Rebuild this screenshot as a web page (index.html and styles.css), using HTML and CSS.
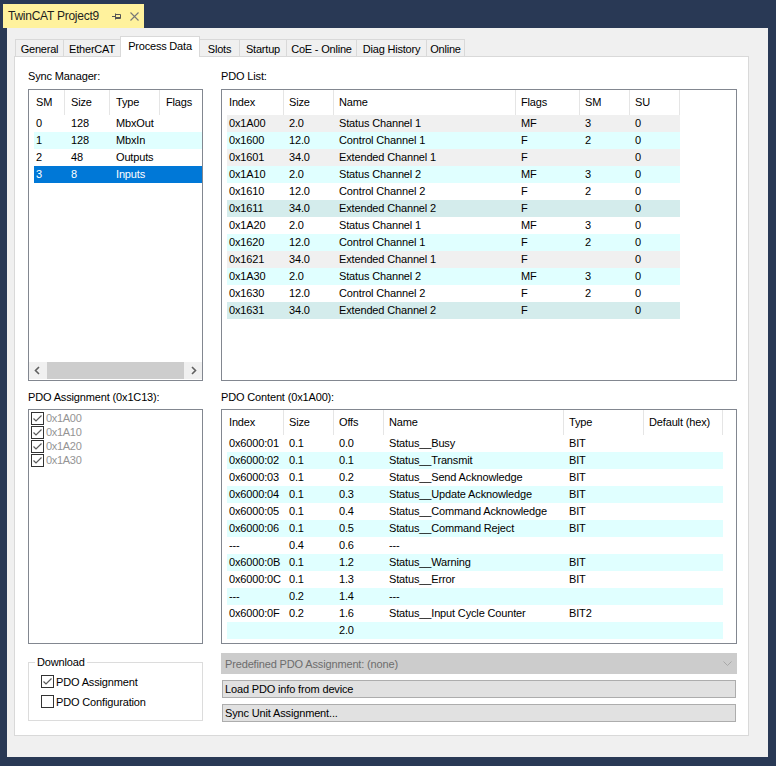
FILE: index.html
```html
<!DOCTYPE html>
<html>
<head>
<meta charset="utf-8">
<link rel="stylesheet" href="styles.css">
</head>
<body>
<div class="doc-bar">
  <div class="doc-tab">
    <span class="doc-title">TwinCAT Project9</span>
    <svg class="pin" viewBox="0 0 9 9"><path d="M0 4.5H3M3.5 1.5V7.5M3.5 2.5H8.5V6.5H3.5M3.5 5.5H8.5" fill="none" stroke="#555" stroke-width="1"/></svg>
    <svg class="close" viewBox="0 0 9 9"><path d="M0.5 0.5L8.5 8.5M8.5 0.5L0.5 8.5" fill="none" stroke="#777" stroke-width="1.1"/></svg>
  </div>
</div>
<div class="window">
  <div class="tabstrip">
    <div class="tab t-general">General</div>
    <div class="tab t-ethercat">EtherCAT</div>
    <div class="tab t-pd selected">Process Data</div>
    <div class="tab t-slots">Slots</div>
    <div class="tab t-startup">Startup</div>
    <div class="tab t-coe">CoE - Online</div>
    <div class="tab t-diag">Diag History</div>
    <div class="tab t-online">Online</div>
  </div>
  <div class="page">
    <div class="col col-left">
      <div class="label">Sync Manager:</div>
      <div class="listbox lb-top sm">
        <div class="hdr">
          <div class="hc c1">SM</div><div class="hc c2">Size</div><div class="hc c3">Type</div><div class="hc c4">Flags</div>
        </div>
        <div class="row"><div class="rc c1">0</div><div class="rc c2">128</div><div class="rc c3">MbxOut</div><div class="rc c4"></div></div>
        <div class="row cyan"><div class="rc c1">1</div><div class="rc c2">128</div><div class="rc c3">MbxIn</div><div class="rc c4"></div></div>
        <div class="row"><div class="rc c1">2</div><div class="rc c2">48</div><div class="rc c3">Outputs</div><div class="rc c4"></div></div>
        <div class="row sel"><div class="rc c1">3</div><div class="rc c2">8</div><div class="rc c3">Inputs</div><div class="rc c4"></div></div>
        <div class="hscroll">
          <div class="arrow"><svg viewBox="0 0 17 17"><polyline points="10,5 6.5,8.5 10,12" fill="none" stroke="#606060" stroke-width="1.6"/></svg></div>
          <div class="track"><div class="thumb"></div></div>
          <div class="arrow"><svg viewBox="0 0 17 17"><polyline points="7,5 10.5,8.5 7,12" fill="none" stroke="#606060" stroke-width="1.6"/></svg></div>
        </div>
      </div>
      <div class="label label2">PDO Assignment (0x1C13):</div>
      <div class="listbox lb-bottom assign">
        <div class="item"><span class="cb dis"><svg viewBox="0 0 11 11"><polyline points="1.5,5.5 4,8 9.5,2.5" fill="none" stroke="#5a5a5a" stroke-width="1.2"/></svg></span><span class="itxt">0x1A00</span></div>
        <div class="item"><span class="cb dis"><svg viewBox="0 0 11 11"><polyline points="1.5,5.5 4,8 9.5,2.5" fill="none" stroke="#5a5a5a" stroke-width="1.2"/></svg></span><span class="itxt">0x1A10</span></div>
        <div class="item"><span class="cb dis"><svg viewBox="0 0 11 11"><polyline points="1.5,5.5 4,8 9.5,2.5" fill="none" stroke="#5a5a5a" stroke-width="1.2"/></svg></span><span class="itxt">0x1A20</span></div>
        <div class="item"><span class="cb dis"><svg viewBox="0 0 11 11"><polyline points="1.5,5.5 4,8 9.5,2.5" fill="none" stroke="#5a5a5a" stroke-width="1.2"/></svg></span><span class="itxt">0x1A30</span></div>
      </div>
      <fieldset class="group">
        <legend>Download</legend>
        <div class="chk"><span class="cb"><svg viewBox="0 0 11 11"><polyline points="1.5,5.5 4,8 9.5,2.5" fill="none" stroke="#5a5a5a" stroke-width="1.2"/></svg></span><span>PDO Assignment</span></div>
        <div class="chk"><span class="cb"></span><span>PDO Configuration</span></div>
      </fieldset>
    </div>
    <div class="col col-right">
      <div class="label">PDO List:</div>
      <div class="listbox lb-top pl">
        <div class="hdr">
          <div class="hc c1">Index</div><div class="hc c2">Size</div><div class="hc c3">Name</div><div class="hc c4">Flags</div><div class="hc c5">SM</div><div class="hc c6">SU</div>
        </div>
        <div class="row gray"><div class="rc c1">0x1A00</div><div class="rc c2">2.0</div><div class="rc c3">Status Channel 1</div><div class="rc c4">MF</div><div class="rc c5">3</div><div class="rc c6">0</div></div>
        <div class="row cyan"><div class="rc c1">0x1600</div><div class="rc c2">12.0</div><div class="rc c3">Control Channel 1</div><div class="rc c4">F</div><div class="rc c5">2</div><div class="rc c6">0</div></div>
        <div class="row gray"><div class="rc c1">0x1601</div><div class="rc c2">34.0</div><div class="rc c3">Extended Channel 1</div><div class="rc c4">F</div><div class="rc c5"></div><div class="rc c6">0</div></div>
        <div class="row cyan"><div class="rc c1">0x1A10</div><div class="rc c2">2.0</div><div class="rc c3">Status Channel 2</div><div class="rc c4">MF</div><div class="rc c5">3</div><div class="rc c6">0</div></div>
        <div class="row"><div class="rc c1">0x1610</div><div class="rc c2">12.0</div><div class="rc c3">Control Channel 2</div><div class="rc c4">F</div><div class="rc c5">2</div><div class="rc c6">0</div></div>
        <div class="row teal"><div class="rc c1">0x1611</div><div class="rc c2">34.0</div><div class="rc c3">Extended Channel 2</div><div class="rc c4">F</div><div class="rc c5"></div><div class="rc c6">0</div></div>
        <div class="row"><div class="rc c1">0x1A20</div><div class="rc c2">2.0</div><div class="rc c3">Status Channel 1</div><div class="rc c4">MF</div><div class="rc c5">3</div><div class="rc c6">0</div></div>
        <div class="row cyan"><div class="rc c1">0x1620</div><div class="rc c2">12.0</div><div class="rc c3">Control Channel 1</div><div class="rc c4">F</div><div class="rc c5">2</div><div class="rc c6">0</div></div>
        <div class="row gray"><div class="rc c1">0x1621</div><div class="rc c2">34.0</div><div class="rc c3">Extended Channel 1</div><div class="rc c4">F</div><div class="rc c5"></div><div class="rc c6">0</div></div>
        <div class="row cyan"><div class="rc c1">0x1A30</div><div class="rc c2">2.0</div><div class="rc c3">Status Channel 2</div><div class="rc c4">MF</div><div class="rc c5">3</div><div class="rc c6">0</div></div>
        <div class="row"><div class="rc c1">0x1630</div><div class="rc c2">12.0</div><div class="rc c3">Control Channel 2</div><div class="rc c4">F</div><div class="rc c5">2</div><div class="rc c6">0</div></div>
        <div class="row teal"><div class="rc c1">0x1631</div><div class="rc c2">34.0</div><div class="rc c3">Extended Channel 2</div><div class="rc c4">F</div><div class="rc c5"></div><div class="rc c6">0</div></div>
      </div>
      <div class="label label2">PDO Content (0x1A00):</div>
      <div class="listbox lb-bottom pc">
        <div class="hdr">
          <div class="hc c1">Index</div><div class="hc c2">Size</div><div class="hc c3">Offs</div><div class="hc c4">Name</div><div class="hc c5">Type</div><div class="hc c6">Default (hex)</div>
        </div>
        <div class="row"><div class="rc c1">0x6000:01</div><div class="rc c2">0.1</div><div class="rc c3">0.0</div><div class="rc c4">Status__Busy</div><div class="rc c5">BIT</div><div class="rc c6"></div></div>
        <div class="row cyan"><div class="rc c1">0x6000:02</div><div class="rc c2">0.1</div><div class="rc c3">0.1</div><div class="rc c4">Status__Transmit</div><div class="rc c5">BIT</div><div class="rc c6"></div></div>
        <div class="row"><div class="rc c1">0x6000:03</div><div class="rc c2">0.1</div><div class="rc c3">0.2</div><div class="rc c4">Status__Send Acknowledge</div><div class="rc c5">BIT</div><div class="rc c6"></div></div>
        <div class="row cyan"><div class="rc c1">0x6000:04</div><div class="rc c2">0.1</div><div class="rc c3">0.3</div><div class="rc c4">Status__Update Acknowledge</div><div class="rc c5">BIT</div><div class="rc c6"></div></div>
        <div class="row"><div class="rc c1">0x6000:05</div><div class="rc c2">0.1</div><div class="rc c3">0.4</div><div class="rc c4">Status__Command Acknowledge</div><div class="rc c5">BIT</div><div class="rc c6"></div></div>
        <div class="row cyan"><div class="rc c1">0x6000:06</div><div class="rc c2">0.1</div><div class="rc c3">0.5</div><div class="rc c4">Status__Command Reject</div><div class="rc c5">BIT</div><div class="rc c6"></div></div>
        <div class="row"><div class="rc c1">---</div><div class="rc c2">0.4</div><div class="rc c3">0.6</div><div class="rc c4">---</div><div class="rc c5"></div><div class="rc c6"></div></div>
        <div class="row cyan"><div class="rc c1">0x6000:0B</div><div class="rc c2">0.1</div><div class="rc c3">1.2</div><div class="rc c4">Status__Warning</div><div class="rc c5">BIT</div><div class="rc c6"></div></div>
        <div class="row"><div class="rc c1">0x6000:0C</div><div class="rc c2">0.1</div><div class="rc c3">1.3</div><div class="rc c4">Status__Error</div><div class="rc c5">BIT</div><div class="rc c6"></div></div>
        <div class="row cyan"><div class="rc c1">---</div><div class="rc c2">0.2</div><div class="rc c3">1.4</div><div class="rc c4">---</div><div class="rc c5"></div><div class="rc c6"></div></div>
        <div class="row"><div class="rc c1">0x6000:0F</div><div class="rc c2">0.2</div><div class="rc c3">1.6</div><div class="rc c4">Status__Input Cycle Counter</div><div class="rc c5">BIT2</div><div class="rc c6"></div></div>
        <div class="row cyan"><div class="rc c1"></div><div class="rc c2"></div><div class="rc c3">2.0</div><div class="rc c4"></div><div class="rc c5"></div><div class="rc c6"></div></div>
      </div>
      <div class="combo">
        <span>Predefined PDO Assignment: (none)</span>
        <svg class="chev" viewBox="0 0 9 5"><polyline points="0.5,0.5 4.5,4.5 8.5,0.5" fill="none" stroke="#a8a8a8" stroke-width="1"/></svg>
      </div>
      <div class="btn">Load PDO info from device</div>
      <div class="btn">Sync Unit Assignment...</div>
    </div>
  </div>
</div>
</body>
</html>
```
FILE: styles.css
```css
* { box-sizing: border-box; }
html, body { margin: 0; padding: 0; }
body {
  width: 776px;
  height: 766px;
  overflow: hidden;
  background: #293955;
  font-family: "Liberation Sans", Arial, sans-serif;
  font-size: 11px;
  letter-spacing: -0.15px;
  color: #000;
}

/* document tab */
.doc-bar { height: 28px; padding: 4px 0 0 3px; display: flex; }
.doc-tab {
  width: 141px;
  height: 24px;
  background: #fff29d;
  display: flex;
  align-items: center;
  padding-left: 5px;
  font-size: 12px;
  letter-spacing: -0.25px;
  color: #1e1e1e;
}
.doc-title { flex: 1; }
.pin { width: 9px; height: 9px; margin-right: 9px; }
.close { width: 9px; height: 9px; margin-right: 5px; }

/* window */
.window {
  margin-left: 7px;
  width: 761px;
  height: 729px;
  background: #f0f0f0;
  padding: 8px 0 0 7px;
}
.tabstrip {
  height: 20px;
  display: flex;
  align-items: flex-end;
  padding-left: 1px;
  letter-spacing: -0.2px;
}
.tab {
  height: 17px;
  border: 1px solid #d9d9d9;
  border-bottom: none;
  margin-left: -1px;
  background: #f0f0f0;
  display: flex;
  align-items: center;
  justify-content: center;
  padding-top: 1px;
  white-space: nowrap;
}
.tab:first-child { margin-left: 0; }
.tab.selected {
  height: 21px;
  margin-bottom: -1px;
  background: #fff;
  position: relative;
  z-index: 1;
  padding-top: 0;
  padding-bottom: 3px;
}
.t-general { width: 49px; }
.t-ethercat { width: 58px; }
.t-pd { width: 80px; }
.t-slots { width: 41px; }
.t-startup { width: 48px; }
.t-coe { width: 71px; }
.t-diag { width: 71px; }
.t-online { width: 39px; }

.page {
  width: 735px;
  height: 680px;
  background: #fff;
  border: 1px solid #d9d9d9;
  display: flex;
  gap: 18px;
  padding: 12px 0 0 13px;
}
.col { display: flex; flex-direction: column; }
.col-left { width: 175px; }
.col-right { width: 516px; }

.label { height: 14px; line-height: 14px; margin-bottom: 6px; white-space: nowrap; }
.label2 { margin-top: 9px; margin-bottom: 5px; }

.listbox {
  border: 1px solid #828790;
  background: #fff;
  overflow: hidden;
  display: flex;
  flex-direction: column;
  flex: none;
}
.lb-top { height: 292px; }
.lb-bottom { height: 235px; }

.hdr { display: flex; height: 25px; flex: none; align-self: flex-start; }
.hc {
  flex: none;
  height: 25px;
  line-height: 25px;
  border-right: 1px solid #e5e5e5;
  padding-left: 5px;
  white-space: nowrap;
  overflow: hidden;
}
.hc.c1 { padding-left: 7px; }

.row { display: flex; height: 17px; margin-left: 5px; flex: none; align-self: flex-start; }
.rc {
  flex: none;
  height: 17px;
  line-height: 17px;
  padding-left: 5px;
  white-space: nowrap;
  overflow: hidden;
}
.rc.c1 { padding-left: 2px; }
.row.cyan { background: #e0ffff; }
.row.gray { background: #f0f0f0; }
.row.teal { background: #d4ecec; }
.row.sel { background: #0078d7; color: #fff; }

/* sync manager columns */
.sm .hc.c1 { width: 36px; }
.sm .hc.c2 { width: 45px; }
.sm .hc.c3 { width: 50px; }
.sm .hc.c4 { width: 60px; }
.sm .rc.c1 { width: 31px; }
.sm .rc.c2 { width: 45px; }
.sm .rc.c3 { width: 50px; }
.sm .rc.c4 { width: 60px; }
.sm .hc, .sm .rc.c2, .sm .rc.c3 { padding-left: 6px; }
.sm .hc.c1 { padding-left: 7px; }

/* pdo list columns */
.pl .hc.c1 { width: 62px; }
.pl .hc.c2 { width: 50px; }
.pl .hc.c3 { width: 182px; }
.pl .hc.c4 { width: 64px; }
.pl .hc.c5 { width: 50px; }
.pl .hc.c6 { width: 50px; }
.pl .rc.c1 { width: 57px; }
.pl .rc.c2 { width: 50px; }
.pl .rc.c3 { width: 182px; }
.pl .rc.c4 { width: 64px; }
.pl .rc.c5 { width: 50px; }
.pl .rc.c6 { width: 50px; }

/* pdo content columns */
.pc .hc.c1 { width: 62px; }
.pc .hc.c2 { width: 50px; }
.pc .hc.c3 { width: 50px; }
.pc .hc.c4 { width: 180px; }
.pc .hc.c5 { width: 80px; }
.pc .hc.c6 { width: 79px; }
.pc .rc.c1 { width: 57px; }
.pc .rc.c2 { width: 50px; }
.pc .rc.c3 { width: 50px; }
.pc .rc.c4 { width: 180px; }
.pc .rc.c5 { width: 80px; }
.pc .rc.c6 { width: 79px; }

/* scrollbar */
.hscroll {
  margin-top: auto;
  margin-bottom: 1px;
  height: 17px;
  display: flex;
  background: #f0f0f0;
  flex: none;
}
.arrow { width: 17px; height: 17px; flex: none; }
.arrow:first-child { width: 18px; }
.arrow svg { width: 17px; height: 17px; display: block; }
.track { flex: 1; display: flex; }
.thumb { width: 137px; height: 17px; background: #cdcdcd; }

/* checkboxes */
.cb {
  width: 13px;
  height: 13px;
  border: 1px solid #333;
  background: #fff;
  display: flex;
  align-items: center;
  justify-content: center;
  flex: none;
}
.cb svg { width: 11px; height: 11px; display: block; }

.assign { padding: 1px 0 0 2px; }
.item { height: 14px; display: flex; align-items: center; flex: none; }
.itxt { color: #949494; margin-left: 2px; letter-spacing: -0.3px; }

.group {
  margin: 11px 0 0 0;
  padding: 0 0 0 12px;
  border: 1px solid #dcdcdc;
  height: 66px;
  min-width: 0;
}
.group legend {
  padding: 0 2px;
  margin-left: -6px;
  line-height: 14px;
  height: 14px;
}
.chk { display: flex; align-items: center; height: 13px; margin-top: 6px; white-space: nowrap; }
.chk + .chk { margin-top: 7px; }
.chk .cb { margin-right: 2px; }

/* combo & buttons */
.combo {
  margin-top: 9px;
  height: 21px;
  background: #cccccc;
  border: 1px solid #cccccc;
  color: #6d6d6d;
  padding: 0 4px 0 3px;
  display: flex;
  align-items: center;
  justify-content: space-between;
  flex: none;
}
.chev { width: 9px; height: 5px; display: block; }
.btn {
  margin: 6px 1px 0 1px;
  height: 18px;
  line-height: 16px;
  background: #e1e1e1;
  border: 1px solid #adadad;
  padding-left: 2px;
  flex: none;
}
```
